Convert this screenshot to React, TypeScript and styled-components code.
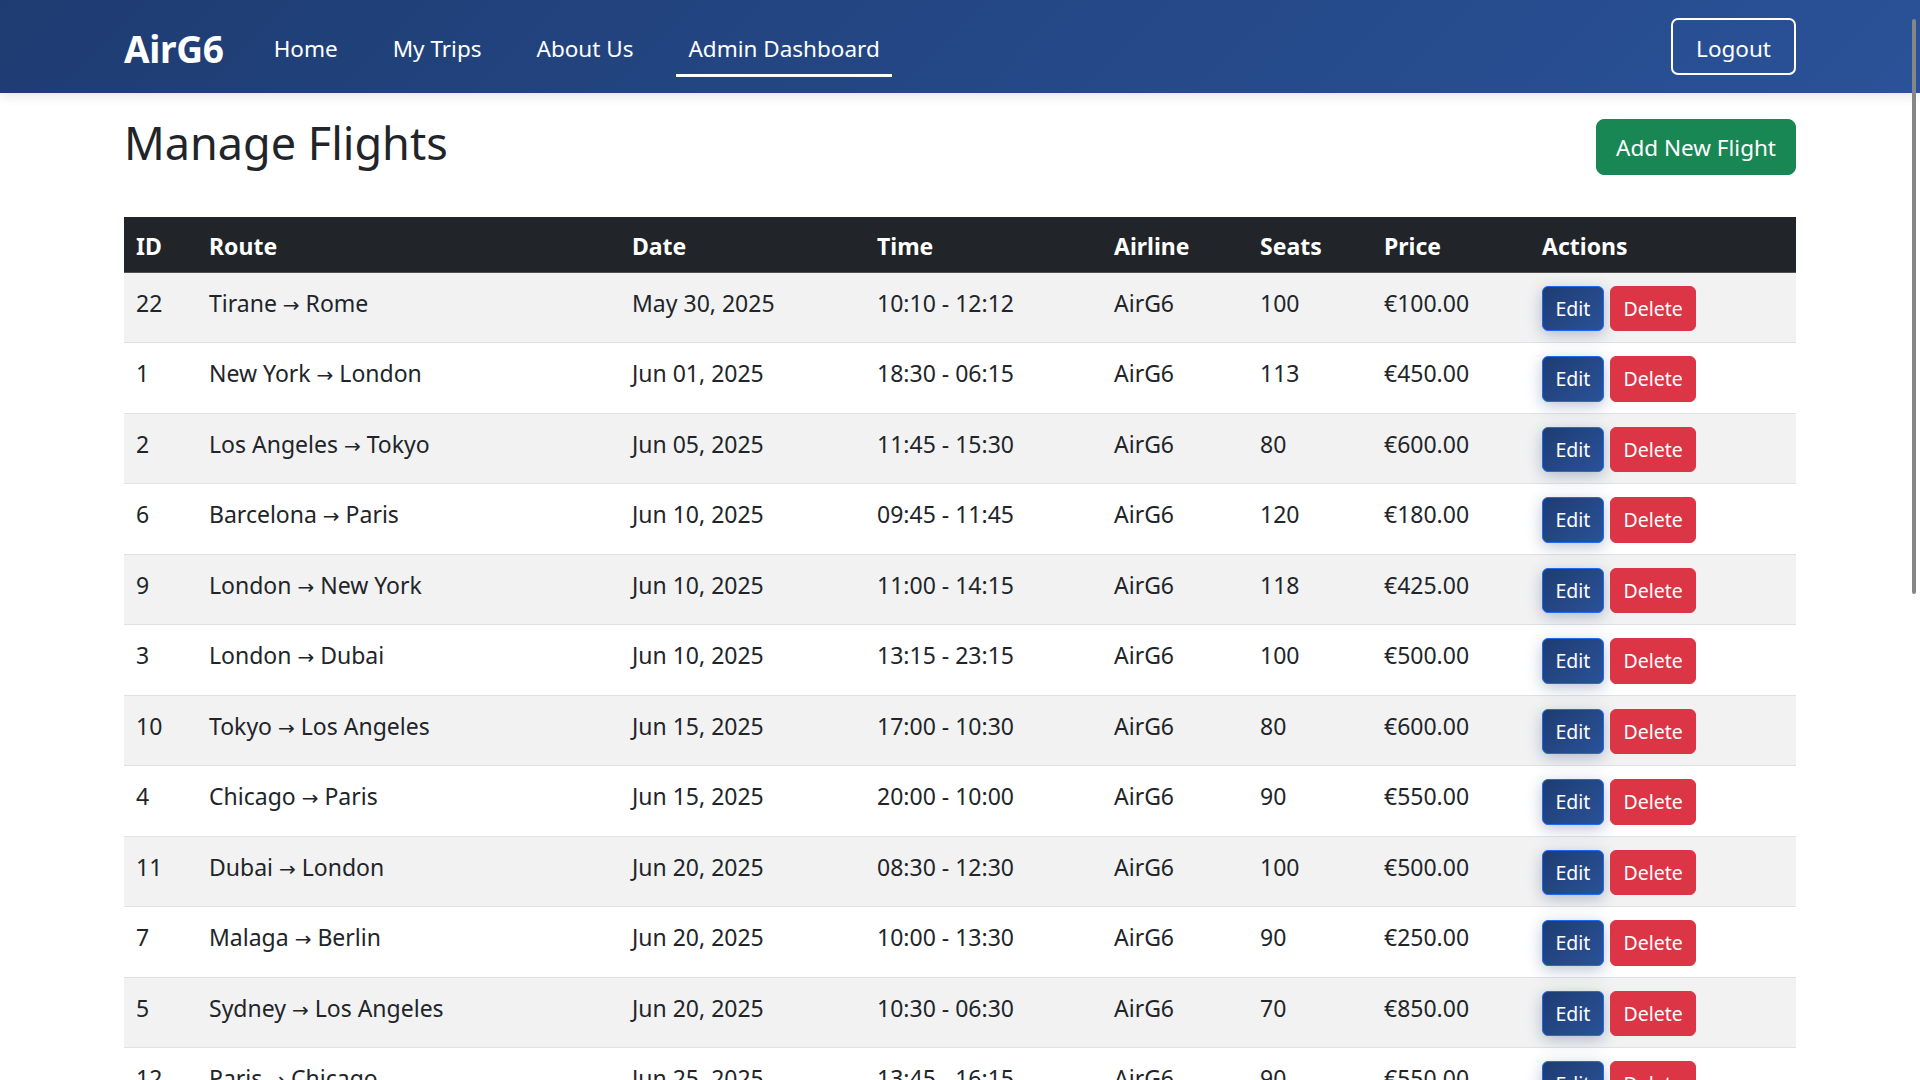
import React from "react";
import styled, { createGlobalStyle } from "styled-components";

const GlobalStyle = createGlobalStyle`
  html { scrollbar-width: none; }
  html::-webkit-scrollbar { display: none; }
  body {
    margin: 0;
    font-family: "Noto Sans", "Open Sans", sans-serif;
    color: #212529;
    background: #ffffff;
  }
  * { box-sizing: border-box; }
`;

const NavBar = styled.nav`
  height: 93px;
  background: linear-gradient(135deg, #1e3c72 0%, #2a5298 100%);
  box-shadow: 0 2px 12px rgba(0, 0, 0, 0.12);
  position: relative;
  z-index: 1;
`;

const Container = styled.div`
  width: calc(100% - 248px);
  margin: 0 auto;
`;

const NavInner = styled(Container)`
  height: 100%;
  display: flex;
  align-items: center;
`;

const Brand = styled.a`
  font-size: 37px;
  font-weight: 700;
  color: #fff;
  text-decoration: none;
  margin-right: 38px;
  letter-spacing: -0.3px;
  padding-top: 4px;
`;

const NavList = styled.ul`
  display: flex;
  align-items: center;
  gap: 31px;
  list-style: none;
  margin: 0;
  padding: 0;
  flex: 1;
`;

const NavLink = styled.a<{ $active?: boolean }>`
  position: relative;
  display: block;
  padding: 10px 12px 6px;
  font-size: 22.5px;
  line-height: 1.5;
  color: #fff;
  text-decoration: none;
  &::after {
    content: "";
    position: absolute;
    left: 0;
    right: 0;
    bottom: -6px;
    height: 3px;
    background: #fff;
    display: ${(p) => (p.$active ? "block" : "none")};
  }
`;

const LogoutButton = styled.button`
  font-family: inherit;
  font-size: 22.5px;
  line-height: 33px;
  padding: 12px 23px 8px;
  color: #fff;
  background: transparent;
  border: 2px solid #fff;
  border-radius: 7px;
  cursor: pointer;
`;

const Main = styled(Container)`
  padding-top: 24px;
`;

const TitleRow = styled.div`
  display: flex;
  align-items: center;
  justify-content: space-between;
  height: 60px;
  margin-bottom: 40px;
`;

const Title = styled.h1`
  margin: 0;
  padding-bottom: 8px;
  font-size: 45px;
  font-weight: 400;
  line-height: 1.2;
  color: #212529;
`;

const AddButton = styled.button`
  font-family: inherit;
  font-size: 22.5px;
  line-height: 34px;
  padding: 11px 19px 9px;
  color: #fff;
  background: #198754;
  border: 1px solid #198754;
  border-radius: 8px;
  cursor: pointer;
`;

const Table = styled.table`
  width: 100%;
  border-collapse: collapse;
  table-layout: fixed;
  font-size: 23px;
  line-height: 1.5;
  vertical-align: top;
`;

const HeadCell = styled.th`
  text-align: left;
  font-weight: 700;
  color: #fff;
  background: #212529;
  padding: 12px 12px 8px;
  border-bottom: 1px solid #4d5154;
`;

const Row = styled.tr<{ $striped: boolean }>`
  background: ${(p) => (p.$striped ? "#f2f2f2" : "#ffffff")};
  border-bottom: 1px solid #dee2e6;
`;

const Cell = styled.td`
  padding: 13px 12px 11px;
  vertical-align: top;
  color: #212529;
  white-space: nowrap;
`;

const Arrow = styled.span`
  font-family: "DejaVu Sans", sans-serif;
  font-size: 20px;
`;

const Actions = styled.div`
  display: flex;
  gap: 6px;
`;

const ActionButton = styled.button<{ $kind: "edit" | "delete" }>`
  font-family: inherit;
  font-size: 19.5px;
  height: 45.5px;
  padding: 0 12.5px;
  display: inline-flex;
  align-items: center;
  color: #fff;
  border-radius: 6px;
  cursor: pointer;
  background: ${(p) =>
    p.$kind === "edit"
      ? "linear-gradient(135deg, #1e3c72 0%, #2a5298 100%)"
      : "#dc3545"};
  border: 1px solid ${(p) => (p.$kind === "edit" ? "#1a6cf0" : "#dc3545")};
  box-shadow: ${(p) =>
    p.$kind === "edit" ? "0 4px 15px rgba(30, 60, 114, 0.3)" : "none"};
`;

const ScrollThumb = styled.div`
  position: fixed;
  top: 19px;
  right: 4px;
  width: 4px;
  height: 575px;
  border-radius: 2px;
  background: #868686;
  z-index: 5;
`;

type Flight = {
  id: number;
  from: string;
  to: string;
  date: string;
  time: string;
  seats: number;
  price: string;
};

const flights: Flight[] = [
  { id: 22, from: "Tirane", to: "Rome", date: "May 30, 2025", time: "10:10 - 12:12", seats: 100, price: "€100.00" },
  { id: 1, from: "New York", to: "London", date: "Jun 01, 2025", time: "18:30 - 06:15", seats: 113, price: "€450.00" },
  { id: 2, from: "Los Angeles", to: "Tokyo", date: "Jun 05, 2025", time: "11:45 - 15:30", seats: 80, price: "€600.00" },
  { id: 6, from: "Barcelona", to: "Paris", date: "Jun 10, 2025", time: "09:45 - 11:45", seats: 120, price: "€180.00" },
  { id: 9, from: "London", to: "New York", date: "Jun 10, 2025", time: "11:00 - 14:15", seats: 118, price: "€425.00" },
  { id: 3, from: "London", to: "Dubai", date: "Jun 10, 2025", time: "13:15 - 23:15", seats: 100, price: "€500.00" },
  { id: 10, from: "Tokyo", to: "Los Angeles", date: "Jun 15, 2025", time: "17:00 - 10:30", seats: 80, price: "€600.00" },
  { id: 4, from: "Chicago", to: "Paris", date: "Jun 15, 2025", time: "20:00 - 10:00", seats: 90, price: "€550.00" },
  { id: 11, from: "Dubai", to: "London", date: "Jun 20, 2025", time: "08:30 - 12:30", seats: 100, price: "€500.00" },
  { id: 7, from: "Malaga", to: "Berlin", date: "Jun 20, 2025", time: "10:00 - 13:30", seats: 90, price: "€250.00" },
  { id: 5, from: "Sydney", to: "Los Angeles", date: "Jun 20, 2025", time: "10:30 - 06:30", seats: 70, price: "€850.00" },
  { id: 12, from: "Paris", to: "Chicago", date: "Jun 25, 2025", time: "13:45 - 16:15", seats: 90, price: "€550.00" },
];

const columns: { label: string; width: number }[] = [
  { label: "ID", width: 73 },
  { label: "Route", width: 423 },
  { label: "Date", width: 245 },
  { label: "Time", width: 237 },
  { label: "Airline", width: 146 },
  { label: "Seats", width: 124 },
  { label: "Price", width: 158 },
  { label: "Actions", width: 266 },
];

export default function App() {
  return (
    <>
      <GlobalStyle />
      <NavBar>
        <NavInner>
          <Brand href="#">AirG6</Brand>
          <NavList>
            <li><NavLink href="#">Home</NavLink></li>
            <li><NavLink href="#">My Trips</NavLink></li>
            <li><NavLink href="#">About Us</NavLink></li>
            <li><NavLink href="#" $active>Admin Dashboard</NavLink></li>
          </NavList>
          <LogoutButton>Logout</LogoutButton>
        </NavInner>
      </NavBar>
      <Main>
        <TitleRow>
          <Title>Manage Flights</Title>
          <AddButton>Add New Flight</AddButton>
        </TitleRow>
        <Table>
          <colgroup>
            {columns.map((c) => (
              <col key={c.label} width={c.width} />
            ))}
          </colgroup>
          <thead>
            <tr>
              {columns.map((c) => (
                <HeadCell key={c.label}>{c.label}</HeadCell>
              ))}
            </tr>
          </thead>
          <tbody>
            {flights.map((f, i) => (
              <Row key={f.id} $striped={i % 2 === 0}>
                <Cell>{f.id}</Cell>
                <Cell>
                  {f.from} <Arrow>→</Arrow> {f.to}
                </Cell>
                <Cell>{f.date}</Cell>
                <Cell>{f.time}</Cell>
                <Cell>AirG6</Cell>
                <Cell>{f.seats}</Cell>
                <Cell>{f.price}</Cell>
                <Cell>
                  <Actions>
                    <ActionButton $kind="edit">Edit</ActionButton>
                    <ActionButton $kind="delete">Delete</ActionButton>
                  </Actions>
                </Cell>
              </Row>
            ))}
          </tbody>
        </Table>
      </Main>
      <ScrollThumb />
    </>
  );
}
